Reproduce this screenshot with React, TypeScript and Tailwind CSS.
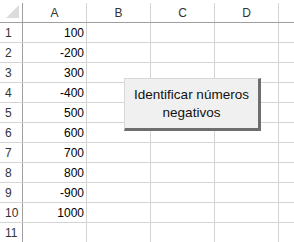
import React from 'react';

const values: (number | null)[] = [100, -200, 300, -400, 500, 600, 700, 800, -900, 1000, null];
const cols = ['A', 'B', 'C', 'D', ''];

export default function App() {
  return (
    <div
      className="relative w-[294px] h-[242px] overflow-hidden bg-white text-[#222]"
      style={{ fontFamily: '"Liberation Sans", Arial, sans-serif' }}
    >
      {/* column headers */}
      <div className="h-[3px]" />
      <div className="grid grid-cols-[23px_64px_64px_64px_64px_64px] h-[20px] border-b border-[#9f9f9f]">
        <div className="relative border-r border-[#9f9f9f]">
          <svg className="absolute left-[6px] top-[2px]" width="13" height="13" viewBox="0 0 13 13">
            <polygon points="13,0 13,13 0,13" fill="#dcdcdc" />
          </svg>
        </div>
        {cols.map((c, i) => (
          <div
            key={i}
            className="flex items-center justify-center border-r border-[#d4d4d4] text-[12px] text-[#333]"
          >
            {c}
          </div>
        ))}
      </div>

      {/* rows */}
      {values.map((v, r) => (
        <div key={r} className="grid grid-cols-[23px_64px_64px_64px_64px_64px] h-[20px] border-b border-[#d4d4d4]">
          <div className="flex items-center pl-[5px] border-r border-[#9f9f9f] text-[12px] text-[#333]">
            {r + 1}
          </div>
          <div className="flex items-center justify-end pr-[2px] border-r border-[#d4d4d4] text-[12px] text-black">
            {v !== null ? v : ''}
          </div>
          <div className="border-r border-[#d4d4d4]" />
          <div className="border-r border-[#d4d4d4]" />
          <div className="border-r border-[#d4d4d4]" />
          <div className="border-r border-[#d4d4d4]" />
        </div>
      ))}

      {/* form button */}
      <button
        className="absolute left-[124px] top-[78px] w-[137px] h-[53px] flex items-center justify-center bg-[#f0f0f0] border-t border-l border-[#d8d8d8] border-r-[3px] border-b-[3px] border-r-[#6e6e6e] border-b-[#6e6e6e] text-[13.5px] leading-[18px] text-[#111] text-center"
      >
        Identificar números
        <br />
        negativos
      </button>
    </div>
  );
}
